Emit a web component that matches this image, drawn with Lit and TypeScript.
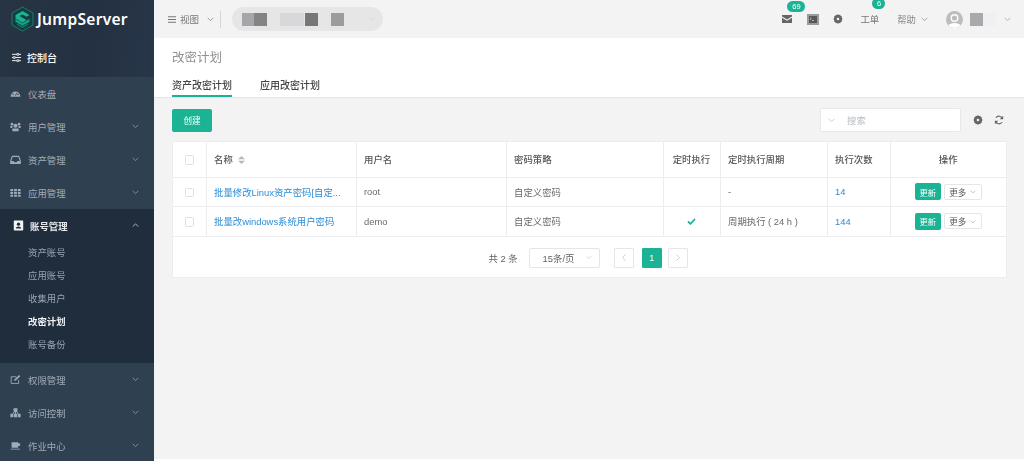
import { LitElement, html, css, svg } from "lit";
import { customElement } from "lit/decorators.js";

const chev = (cls = "") => html`<svg class="chev ${cls}" viewBox="0 0 10 6"><path d="M1 1l4 4 4-4" fill="none" stroke="currentColor" stroke-width="1"/></svg>`;

const icons: Record<string, any> = {
  dash: svg`<path d="M.8 11a6.200 6.500 0 0 1 12.400 0z" fill="currentColor"/><circle cx="3.800" cy="8" r="1" fill="#2f4050"/><circle cx="10.200" cy="8" r="1" fill="#2f4050"/><path d="M7 10l1.500-4" stroke="#2f4050"/>`,
  users: svg`<circle cx="7" cy="6" r="2.600" fill="currentColor"/><circle cx="2.500" cy="4" r="1.700" fill="currentColor"/><circle cx="11.500" cy="4" r="1.700" fill="currentColor"/><path d="M3 13V9.500h8V13zM.5 9V6.500h2.600V9zM10.900 9V6.500h2.600V9z" fill="currentColor"/>`,
  inbox: svg`<path d="M3 3h8l2 5v4H1V8z" fill="none" stroke="currentColor" stroke-width="1.400"/><path d="M1 9h3.500l1 1.500h3l1-1.500H13v3H1z" fill="currentColor"/>`,
  grid: svg`<path d="M.5 2.500h3.500v2.600H.5zM5.200 2.500h3.600v2.600H5.200zM10 2.500h3.500v2.600H10zM.5 6.200h3.500v2.600H.5zM5.200 6.200h3.600v2.600H5.200zM10 6.200h3.500v2.600H10zM.5 9.900h3.500v2.600H.5zM5.200 9.900h3.600v2.600H5.200zM10 9.900h3.500v2.600H10z" fill="currentColor"/>`,
  account: svg`<path d="M2 .5h10a1 1 0 0 1 1 1v11a1 1 0 0 1-1 1H2a1 1 0 0 1-1-1v-11a1 1 0 0 1 1-1z" fill="#f4f5f6"/><circle cx="7" cy="5.300" r="2.100" fill="#1f2d3d"/><path d="M3.500 10.800c0-3.400 7-3.400 7 0z" fill="#1f2d3d"/>`,
  edit: svg`<path d="M11 7.500V12H1.500V3.500H8" fill="none" stroke="currentColor" stroke-width="1.100"/><path d="M5.500 8.800l.4-2L11.500 1.300l1.600 1.600L7.500 8.400z" fill="currentColor"/>`,
  sitemap: svg`<path d="M4.500 1.500h5v4H8.800l2.200 3h2.500v4.500H9.800V8.800L8.200 6.500H7.600v2h1.400V13H5V8.500h1.400v-2h-.6L4.200 8.800V13H.5V8.500H3l2.200-3h-.7z" fill="currentColor"/>`,
  coffee: svg`<path d="M2 3h8.500v1h1.300A1.400 1.400 0 0 1 13 5.400v.7a1.500 1.500 0 0 1-1.500 1.500h-1v.9A1.500 1.500 0 0 1 9 10H3.500A1.500 1.500 0 0 1 2 8.500zM.8 11h12v1.200H.8z" fill="currentColor"/>`,
};
const icon = (n: string) => html`<svg class="ic" viewBox="0 0 14 14">${icons[n]}</svg>`;

const gearPath = svg`<path fill-rule="evenodd" fill="currentColor" d="M6 .2l1.200 1 1.500-.3.500 1.400 1.500.5-.3 1.500 1.100 1.700-1.100 1.700.3 1.500-1.500.5-.5 1.400-1.500-.3-1.200 1-1.200-1-1.500.3-.5-1.400-1.500-.5.3-1.500L.5 6l1.100-1.700-.3-1.500 1.500-.5.500-1.400 1.500.3zM6 4.400a1.600 1.600 0 1 0 0 3.200 1.600 1.600 0 0 0 0-3.200z"/>`;

const menuTop = [
  ["dash", "仪表盘", false],
  ["users", "用户管理", true],
  ["inbox", "资产管理", true],
  ["grid", "应用管理", true],
] as const;
const menuBottom = [
  ["edit", "权限管理"],
  ["sitemap", "访问控制"],
  ["coffee", "作业中心"],
] as const;
const subs = ["资产账号", "应用账号", "收集用户", "改密计划", "账号备份"];
const heads = ["名称", "用户名", "密码策略", "定时执行", "定时执行周期", "执行次数", "操作"];
const rows = [
  { name: "批量修改Linux资产密码[自定...", user: "root", strat: "自定义密码", on: false, period: "-", n: "14" },
  { name: "批量改windows系统用户密码", user: "demo", strat: "自定义密码", on: true, period: "周期执行 ( 24 h )", n: "144" },
];

@customElement("app-root")
export class AppRoot extends LitElement {
  static styles = css`
    :host { display: block; width: 1024px; height: 461px; overflow: hidden; background: #fff;
      font-family: "Liberation Sans", "Noto Sans CJK SC", sans-serif; font-size: 9.4px; color: #676a6c; }
    * { box-sizing: border-box; }
    .app { display: flex; height: 461px; filter: blur(0.4px); }
    .side { width: 154px; flex: none; background: #2f4050; color: #a1abb8; display: flex; flex-direction: column; height: 461px; }
    .top { height: 77px; background: linear-gradient(100deg, #273444 0%, #243142 60%, #28364a 100%); flex: none; }
    .logo { height: 38px; display: flex; align-items: center; padding-left: 11px; gap: 3px; color: #fff;
      font-family: "Noto Sans", sans-serif; font-weight: 600; font-size: 15.6px; letter-spacing: .25px; }
    .logo svg { width: 23px; height: 26px; flex: none; }
    .console { height: 39px; display: flex; align-items: center; padding-left: 12px; gap: 6px; color: #fff; font-size: 10px; font-weight: 500; }
    .console svg { width: 9px; height: 9px; }
    .item { height: 33px; display: flex; align-items: center; padding: 0 15px 0 10px; gap: 7px; }
    .item .lbl { flex: 1; }
    .ic { width: 11px; height: 11px; flex: none; }
    .chev { width: 7px; height: 4.5px; flex: none; }
    .chev.up { transform: rotate(180deg); }
    .active { background: #1f2d3d; height: 154px; flex: none; }
    .active .item { color: #e8ebee; padding-left: 13px; gap: 6px; font-weight: 700; }
    .subs { display: flex; flex-direction: column; padding-left: 28px; margin-top: -2px; }
    .sub { height: 23px; display: flex; align-items: center; color: #98a3b0; }
    .sub.cur { color: #eef0f2; font-weight: 700; }
    .bm { flex: 1; }
    .endbar { height: 4px; background: #1f2d3d; flex: none; }

    .main { flex: 1; min-width: 0; background: #f3f3f4; display: flex; flex-direction: column; height: 459px; }
    .hdr { height: 38px; flex: none; display: flex; align-items: center; padding: 0 13px 0 14px; color: #777; }
    .menu-ic { width: 8px; height: 7px; margin-right: 4px; flex: none; }
    .divider { width: 1px; height: 17px; background: #d6d6d8; margin: 0 11px 0 6px; }
    .v { font-size: 9.5px; margin-right: 8px; }
    .pill { width: 151px; height: 24px; border-radius: 12px; background: #e6e6e7; display: flex; align-items: center; padding: 0 10px; flex: none; color: #d0d0d0; }
    .blk { height: 13px; flex: none; }
    .b1 { width: 12px; background: #a6a5a7; }
    .b2 { width: 13px; background: #848385; }
    .b3 { width: 24px; background: #d8d7d9; margin-left: 13px; }
    .b4 { width: 13px; background: #777678; margin-left: 1px; }
    .b5 { width: 13px; background: #9c9b9d; margin-left: 13px; margin-right: 24px; }
    .sp { flex: 1; }
    .hic { position: relative; display: flex; align-items: center; color: #666; }
    .badge { position: absolute; top: -14.5px; height: 11px; border-radius: 6px; background: #1ab394; color: #fff; font-size: 7.5px;
      display: flex; align-items: center; justify-content: center; }
    .b69 { left: 5px; width: 18px; }
    .b6 { left: 12px; width: 13px; }
    .mail { width: 10px; height: 8px; margin-right: 15px; }
    .term { width: 12px; height: 11px; margin-right: 14px; }
    .gear { width: 10px; height: 10px; margin-right: 17px; color: #666; flex: none; }
    .wd { color: #777; }
    .help { margin-left: 18px; display: flex; align-items: center; gap: 5px; color: #888; }
    .ava { width: 17px; height: 17px; margin-left: 18px; flex: none; }
    .nm { width: 13px; height: 13px; background: #a9a8aa; margin-left: 7px; }
    .nm2 { width: 13px; height: 13px; background: #f0f0f2; margin-right: 8px; }
    .last { color: #999; }

    .head { height: 60px; flex: none; background: #fff; border-bottom: 1px solid #e4e5ea; padding: 12px 18px 0; }
    .title { font-size: 12.5px; color: #8f9092; line-height: 16px; height: 25px; }
    .tabs { display: flex; gap: 28px; font-size: 10px; color: #444; font-weight: 500; }
    .tab { height: 22px; padding-top: 4px; line-height: 14px; }
    .tab.on { border-bottom: 2px solid #1ab394; }

    .body { padding: 10px 17px 0 18px; flex: 1; }
    .tools { display: flex; align-items: center; height: 24px; }
    .btn-new { width: 40px; height: 23px; border-radius: 2px; background: #1ab394; color: #fff; display: flex; align-items: center; justify-content: center; font-size: 8.6px; }
    .search { width: 141px; height: 24px; background: #fff; border: 1px solid #e8e8ec; border-radius: 2px; display: flex; align-items: center; padding-left: 7px; color: #b8bcc4; gap: 12px; }
    .t-ic { color: #666; margin-left: 12px; width: 10px; height: 10px; flex: none; }
    .t-ic.a { margin-left: 11px; margin-right: 3px; }
    .card { margin-top: 9px; background: #fff; border: 1px solid #ededf1; height: 137px; }
    table { border-collapse: collapse; table-layout: fixed; width: 833px; }
    th, td { border-right: 1px solid #ededf1; border-bottom: 1px solid #ededf1; padding: 0 7.5px; text-align: left; font-weight: 400; white-space: nowrap; }
    th:last-child, td:last-child { border-right: none; }
    thead tr { height: 35px; } tbody tr { height: 29.5px; }
    th { color: #555; font-weight: 500; }
    .c0 { width: 33px; } .c1 { width: 150px; } .c2 { width: 150px; } .c3 { width: 157px; } .c4 { width: 57px; } .c5 { width: 107px; } .c6 { width: 63px; } .c7 { width: 116px; }
    .cen { text-align: center; padding: 0; }
    .chk { display: inline-block; width: 9.5px; height: 9.5px; border: 1px solid #dcdfe6; border-radius: 1.5px; background: #fff; vertical-align: middle; }
    .sort { display: inline-block; width: 7px; height: 8px; margin-left: 5px; vertical-align: -1px; color: #b5b8bd; }
    a { color: #2d8cd6; }
    .ok { width: 9px; height: 7px; color: #1ab394; }
    .ops { display: flex; justify-content: center; align-items: center; gap: 3px; }
    .upd { width: 26px; height: 17px; background: #1ab394; border-radius: 2px; color: #fff; font-size: 8.3px; display: flex; align-items: center; justify-content: center; }
    .more { width: 38px; height: 16px; border: 1px solid #e4e6ea; border-radius: 2px; display: flex; align-items: center; justify-content: center; gap: 4px; color: #555; font-size: 8.6px; background: #fff; }
    .more .chev { width: 6px; height: 3.5px; color: #999; }
    .pager { height: 42px; display: flex; align-items: center; justify-content: center; padding-right: 3px; color: #606266; }
    .total { margin-right: 11px; }
    .size { width: 71px; height: 20px; border: 1px solid #e6e6ea; border-radius: 2px; display: flex; align-items: center; justify-content: space-between; padding: 0 7px 0 13px; margin-right: 14px; }
    .size .chev { color: #c0c4cc; width: 6px; }
    .pg { width: 20px; height: 20px; border: 1px solid #e6e6ea; border-radius: 1px; display: flex; align-items: center; justify-content: center; color: #c0c4cc; }
    .pg svg { width: 4px; height: 7px; }
    .pg.cur { background: #1ab394; border-color: #1ab394; color: #fff; font-size: 8.6px; margin: 0 6px 0 8px; }
  `;

  render() {
    return html`<div class="app">
      <aside class="side">
        <div class="top">
          <div class="logo">
            <svg viewBox="0 0 23 26">
              <path d="M11.500 1L22 7v12l-10.500 6L1 19V7z" fill="#143d40" stroke="#1f7a68" stroke-width="1"/>
              <path d="M4.500 9l7-4 7 4-3 1.700-4-2.300-3 1.700 7 4-4 2.300-7-4z" fill="#1ab394"/>
              <path d="M4.500 13l7 4 7-4v2.700l-7 4-7-4z" fill="#17a085"/>
              <path d="M6 17.500l5.500 3 5.500-3v1.300l-5.500 3.200L6 18.800z" fill="#12806c"/>
            </svg>
            <span>JumpServer</span>
          </div>
          <div class="console">
            <svg viewBox="0 0 10 10"><path d="M0 1.500h5.500M7.500 1.500H10M0 5h1.500M3.500 5H10M0 8.500h5.500M7.500 8.500H10" stroke="#fff" fill="none"/><path d="M5.500.5h2v2h-2zM1.500 4h2v2h-2zM5.500 7.500h2v2h-2z" fill="none" stroke="#fff" stroke-width=".8"/></svg>
            <span>控制台</span>
          </div>
        </div>
        <div>
          ${menuTop.map(([i, t, c]) => html`<div class="item">${icon(i)}<span class="lbl">${t}</span>${c ? chev() : ""}</div>`)}
        </div>
        <div class="active">
          <div class="item">${icon("account")}<span class="lbl">账号管理</span>${chev("up")}</div>
          <div class="subs">
            ${subs.map((s) => html`<div class="sub ${s === "改密计划" ? "cur" : ""}">${s}</div>`)}
          </div>
        </div>
        <div class="bm">
          ${menuBottom.map(([i, t]) => html`<div class="item">${icon(i)}<span class="lbl">${t}</span>${chev()}</div>`)}
        </div>
        <div class="endbar"></div>
      </aside>
      <main class="main">
        <header class="hdr">
          <svg class="menu-ic" viewBox="0 0 8 7"><path d="M0 .75h8M0 3.500h8M0 6.250h8" stroke="#777" fill="none"/></svg>
          <span class="v">视图</span>${chev()}
          <div class="divider"></div>
          <div class="pill">
            <i class="blk b1"></i><i class="blk b2"></i><i class="blk b3"></i><i class="blk b4"></i><i class="blk b5"></i>${chev()}
          </div>
          <div class="sp"></div>
          <div class="hic">
            <svg class="mail" viewBox="0 0 10 8"><path d="M0 0h10v1.500L5 4.500 0 1.500zM0 2.700l5 3 5-3V8H0z" fill="#666"/></svg>
            <span class="badge b69">69</span>
          </div>
          <svg class="term" viewBox="0 0 12 11"><path d="M0 0h12v11H0z" fill="#9b9b9d"/><path d="M2 2h8v7H2z" fill="#55595c"/><path d="M3 3.500l1.300 1.200L3 6M5 6.500h2" stroke="#ddd" stroke-width=".7" fill="none"/></svg>
          <svg class="gear" viewBox="0 0 12 12">${gearPath}</svg>
          <div class="hic"><span class="wd">工单</span><span class="badge b6">6</span></div>
          <div class="help"><span>帮助</span>${chev()}</div>
          <svg class="ava" viewBox="0 0 17 17"><circle cx="8.500" cy="8.500" r="8.500" fill="#bdbcbe"/><circle cx="8.500" cy="7" r="4" fill="#fff"/><circle cx="8.500" cy="7" r="2.600" fill="#bdbcbe"/><path d="M2.500 14.500c1-3.500 11-3.500 12 0a8.500 8.500 0 0 1-12 0z" fill="#fff"/></svg>
          <i class="nm"></i><i class="nm2"></i>
          ${chev("last")}
        </header>
        <section class="head">
          <div class="title">改密计划</div>
          <div class="tabs"><div class="tab on">资产改密计划</div><div class="tab">应用改密计划</div></div>
        </section>
        <section class="body">
          <div class="tools">
            <div class="btn-new">创建</div>
            <div class="sp"></div>
            <div class="search">${chev()}<span>搜索</span></div>
            <svg class="t-ic" viewBox="0 0 12 12">${gearPath}</svg>
            <svg class="t-ic a" viewBox="0 0 12 12"><path d="M10.200 4.500A4.500 4.500 0 0 0 2.300 3.300M1.800 7.500a4.500 4.500 0 0 0 7.900 1.200" fill="none" stroke="currentColor" stroke-width="1.500"/><path d="M11 1v4H7zM1 11V7h4z" fill="currentColor"/></svg>
          </div>
          <div class="card">
            <table>
              <colgroup>
                <col class="c0"/><col class="c1"/><col class="c2"/><col class="c3"/><col class="c4"/><col class="c5"/><col class="c6"/><col class="c7"/>
              </colgroup>
              <thead><tr>
                <th class="cen"><i class="chk"></i></th>
                ${heads.map((h, i) => html`<th class="${i === 3 || i === 6 ? "cen" : ""}">${h}${i === 0 ? html`<svg class="sort" viewBox="0 0 7 8"><path d="M3.500 0L7 3.300H0zM3.500 8L0 4.700h7z" fill="currentColor"/></svg>` : ""}</th>`)}
              </tr></thead>
              <tbody>
                ${rows.map((r) => html`<tr>
                  <td class="cen"><i class="chk"></i></td>
                  <td><a>${r.name}</a></td>
                  <td>${r.user}</td>
                  <td>${r.strat}</td>
                  <td class="cen">${r.on ? html`<svg class="ok" viewBox="0 0 9 7"><path d="M1 3.500l2.500 2.300L8 1" fill="none" stroke="currentColor" stroke-width="1.800"/></svg>` : ""}</td>
                  <td>${r.period}</td>
                  <td><a>${r.n}</a></td>
                  <td class="cen"><div class="ops"><span class="upd">更新</span><span class="more">更多${chev()}</span></div></td>
                </tr>`)}
              </tbody>
            </table>
            <div class="pager">
              <span class="total">共 2 条</span>
              <div class="size"><span>15条/页</span>${chev()}</div>
              <div class="pg"><svg viewBox="0 0 4 7"><path d="M3.500.5L.5 3.500l3 3" fill="none" stroke="currentColor" stroke-width=".8"/></svg></div>
              <div class="pg cur">1</div>
              <div class="pg"><svg viewBox="0 0 4 7"><path d="M.5.5l3 3-3 3" fill="none" stroke="currentColor" stroke-width=".8"/></svg></div>
            </div>
          </div>
        </section>
      </main>
    </div>`;
  }
}
